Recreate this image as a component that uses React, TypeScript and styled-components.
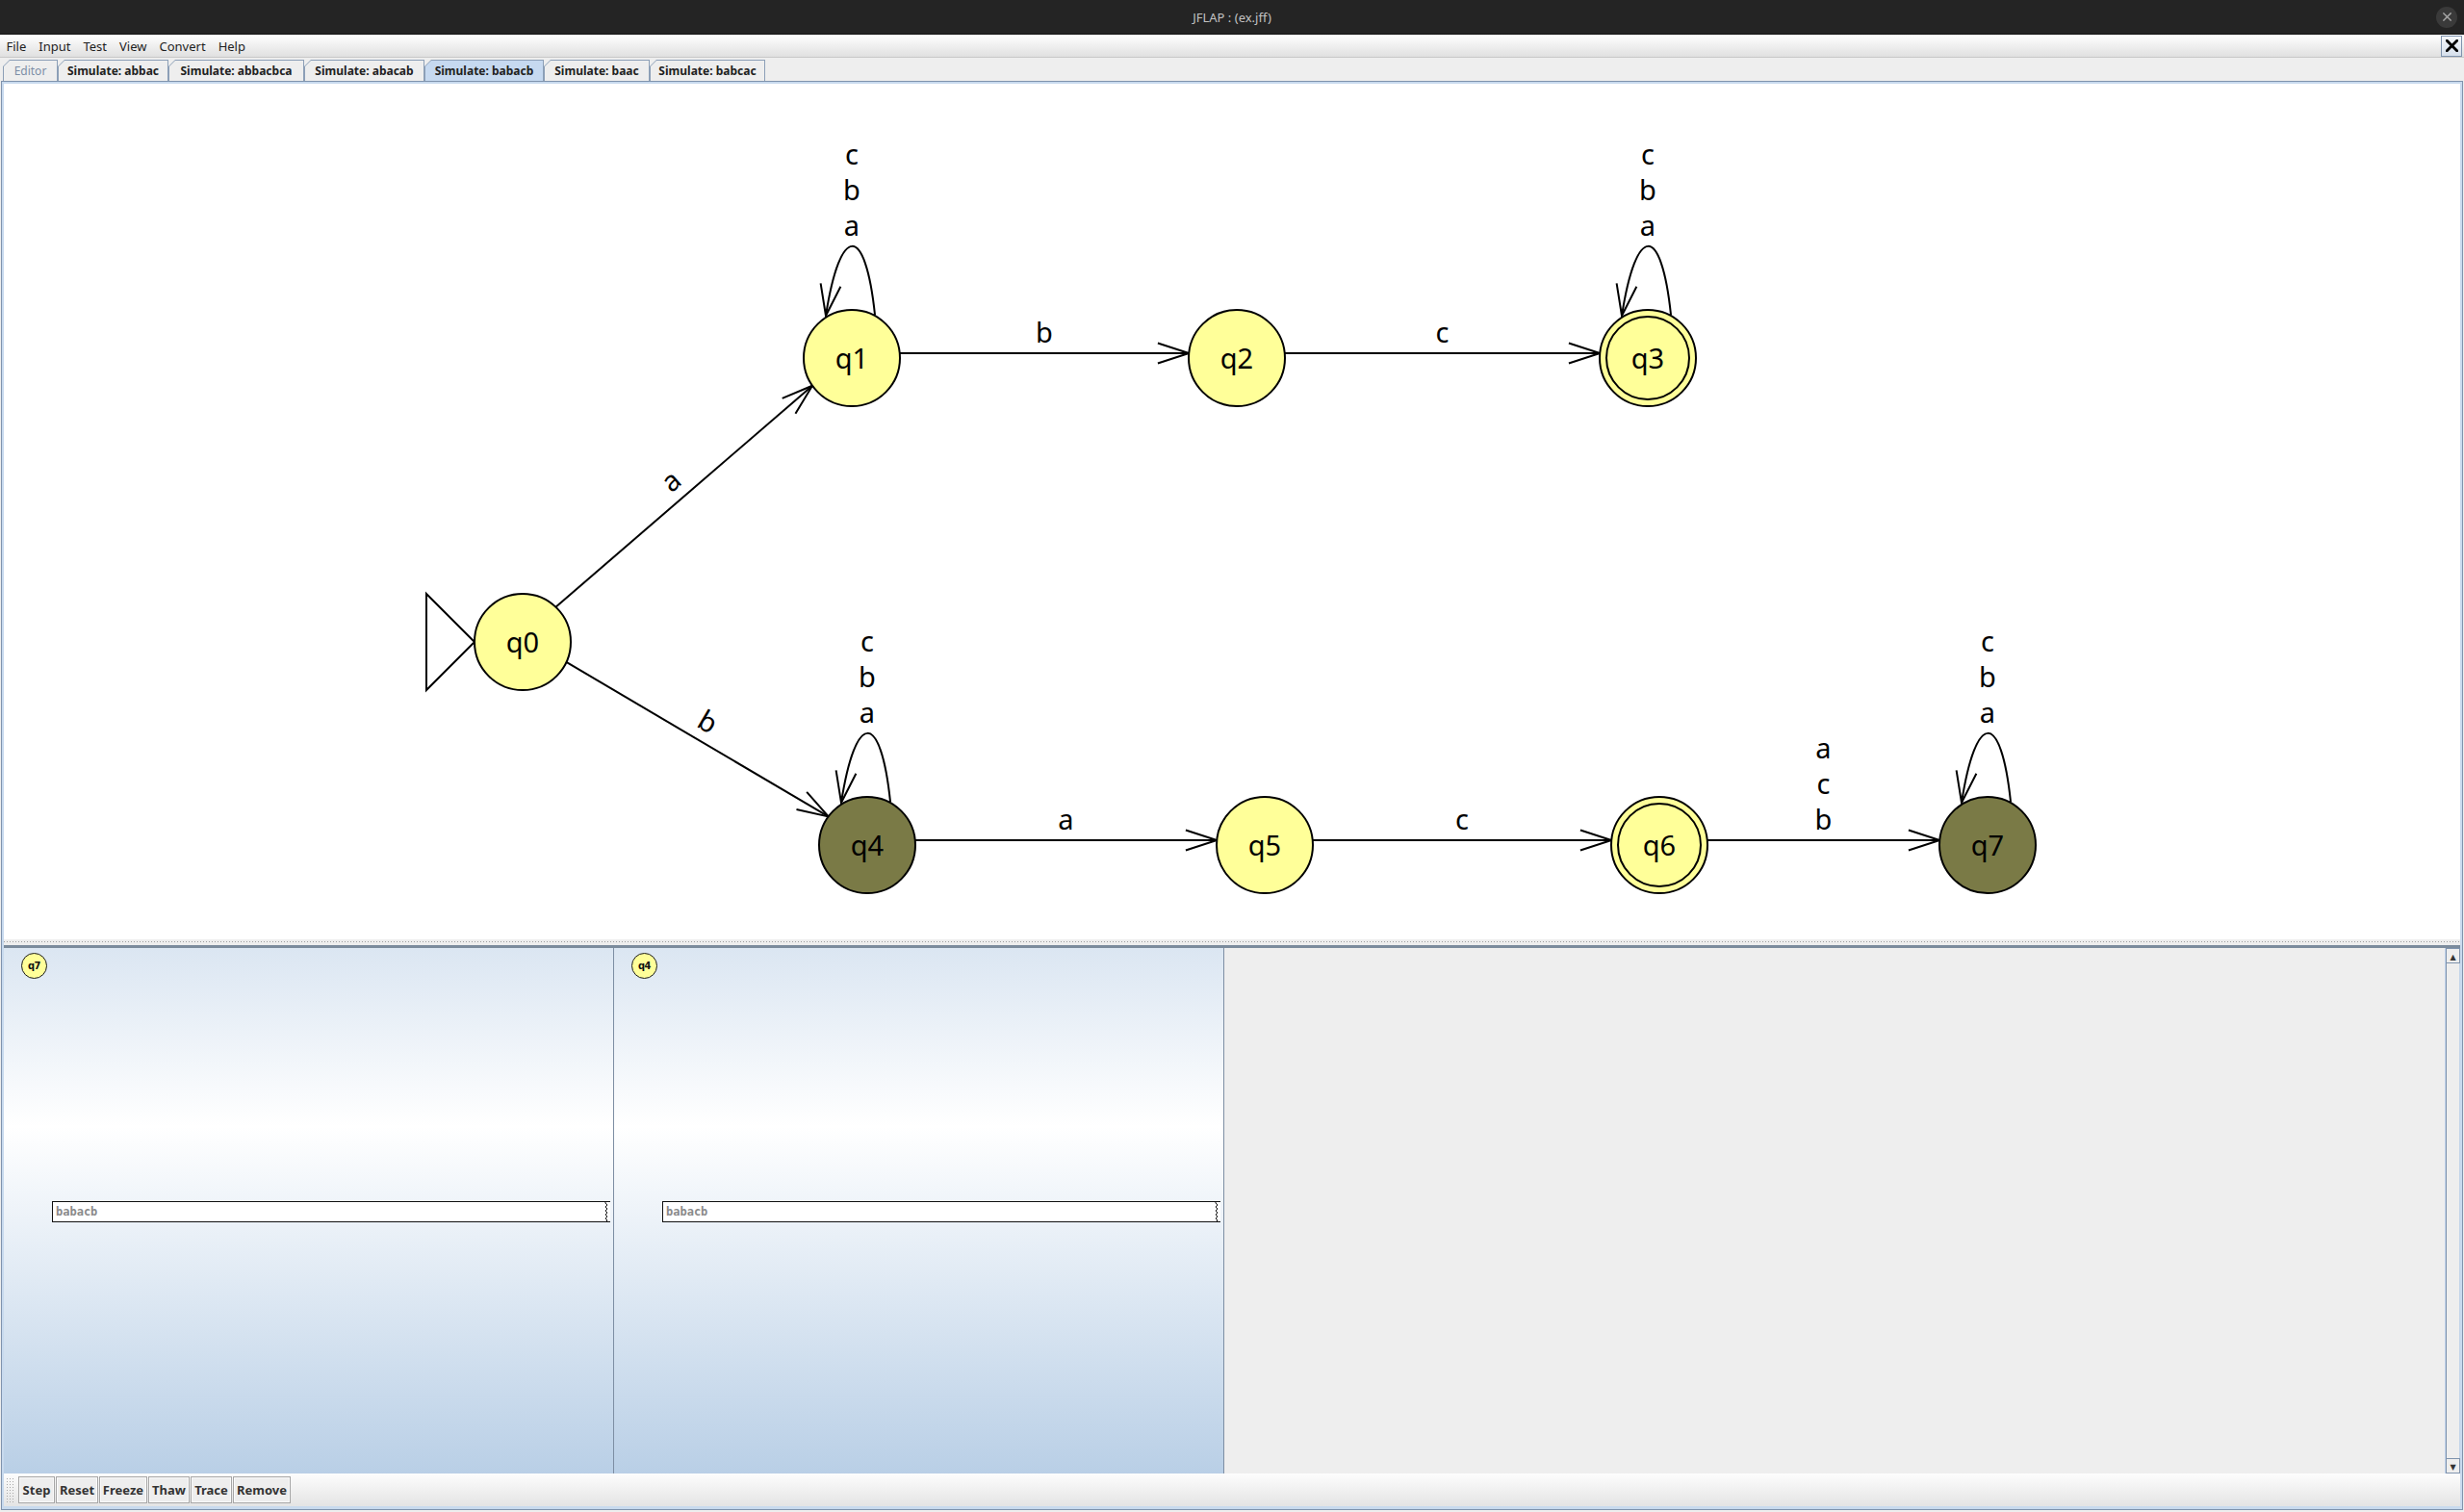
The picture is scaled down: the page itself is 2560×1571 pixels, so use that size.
import React from 'react';
import styled, { createGlobalStyle } from 'styled-components';

const GlobalStyle = createGlobalStyle`
  html, body { margin: 0; padding: 0; width: 2560px; height: 1571px; overflow: hidden; background: #eeeeee; }
  #root { width: 2560px; height: 1571px; }
  * { box-sizing: border-box; }
`;

const Window = styled.div`
  width: 2560px;
  height: 1571px;
  display: flex;
  flex-direction: column;
  background: #eeeeee;
  font-family: "Noto Sans", "DejaVu Sans", sans-serif;
`;

const TitleBar = styled.div`
  height: 36px;
  flex: none;
  background: #242424;
  border-bottom: 1px solid #151515;
  display: grid;
  grid-template-columns: 1fr auto 1fr;
  align-items: center;
`;

const TitleText = styled.div`
  grid-column: 2;
  color: #c2c2c2;
  font-size: 13px;
`;

const TitleClose = styled.div`
  grid-column: 3;
  justify-self: end;
  margin-right: 7px;
  width: 22px;
  height: 22px;
  border-radius: 50%;
  background: #3a3a3a;
  display: flex;
  align-items: center;
  justify-content: center;
`;

const MenuBar = styled.div`
  height: 24px;
  flex: none;
  display: flex;
  align-items: center;
  background: linear-gradient(#ffffff, #e0e0e0);
  border-bottom: 1px solid #c8c8c8;
`;

const MenuItem = styled.div`
  font-size: 13px;
  color: #1e1e1e;
  padding: 0 6.5px;
`;

const MenuClose = styled.div`
  margin-left: auto;
  margin-right: 2px;
  width: 22px;
  height: 22px;
  border: 1px solid #7f93ad;
  background: linear-gradient(#f4f7fb, #d6e0ec);
  display: flex;
  align-items: center;
  justify-content: center;
`;

const TabStrip = styled.div`
  height: 24px;
  flex: none;
  display: flex;
  align-items: flex-end;
  padding-left: 3px;
`;

const Tab = styled.div<{ $w: number }>`
  width: ${(p) => p.$w}px;
  height: 22px;
  background: #8c9fb7;
  padding: 1px 1px 0 1px;
  clip-path: polygon(7px 0, 100% 0, 100% 100%, 0 100%, 0 7px);
`;

const TabFace = styled.div<{ $active?: boolean; $disabled?: boolean }>`
  height: 100%;
  background: ${(p) => (p.$active ? '#c6d9f0' : '#eeeeee')};
  clip-path: polygon(6px 0, 100% 0, 100% 100%, 0 100%, 0 6px);
  display: flex;
  align-items: center;
  justify-content: center;
  font-size: 12px;
  font-weight: ${(p) => (p.$disabled ? 400 : 700)};
  color: ${(p) => (p.$disabled ? '#7d8ea6' : '#222222')};
  white-space: nowrap;
`;

const TabBody = styled.div`
  flex: 1;
  margin: 0 1px 2px 1px;
  border: 1px solid #7f93ad;
  background: #c8daee;
  padding: 2px;
  display: flex;
  flex-direction: column;
`;

const Canvas = styled.div`
  height: 889px;
  flex: none;
  background: #ffffff;
`;

const Divider = styled.div`
  height: 6px;
  flex: none;
  background: #eeeeee;
  padding-top: 2px;
  &::before {
    content: '';
    display: block;
    height: 1px;
    background: repeating-linear-gradient(90deg, #9c9c9c 0 1px, transparent 1px 3px);
  }
`;

const ConfigArea = styled.div`
  height: 549px;
  flex: none;
  border-top: 3px solid #7b8b9c;
  display: flex;
  background: #eeeeee;
`;

const ConfigPane = styled.div`
  width: 634px;
  flex: none;
  border-right: 1px solid #7d8ea3;
  background: linear-gradient(#dbe6f2 0%, #ffffff 34%, #b9cfe6 100%);
  padding: 5px 0 0 18px;
  display: flex;
  flex-direction: column;
  align-items: flex-start;
`;

const Badge = styled.div`
  width: 27px;
  height: 27px;
  border-radius: 50%;
  background: #ffff99;
  border: 1px solid #1a1a1a;
  display: flex;
  align-items: center;
  justify-content: center;
  font-family: "DejaVu Sans Condensed", "DejaVu Sans", sans-serif;
  font-weight: 700;
  font-size: 11px;
  letter-spacing: -0.6px;
  color: #111;
`;

const Tape = styled.div`
  margin-top: 231px;
  margin-left: 32px;
  width: 580px;
  height: 22px;
  background: #ffffff;
  border: 1px solid #111111;
  border-right: none;
  display: flex;
  align-items: center;
`;

const TapeText = styled.span`
  flex: 1;
  padding-left: 3px;
  font-family: "DejaVu Sans Mono", monospace;
  font-weight: 700;
  font-size: 12px;
  color: #8a8a8a;
`;

const Filler = styled.div`
  flex: 1;
`;

const ScrollBar = styled.div`
  width: 16px;
  flex: none;
  display: flex;
  flex-direction: column;
  border-left: 1px solid #c2d4ea;
  background: #eeeeee;
`;

const ScrollBtn = styled.div`
  height: 16px;
  flex: none;
  border: 1px solid #7f93ad;
  background: #eeeeee;
  display: flex;
  align-items: center;
  justify-content: center;
  font-size: 8px;
  color: #333;
`;

const ScrollTrack = styled.div`
  flex: 1;
  border-left: 1px solid #7f93ad;
  border-right: 1px solid #c2d4ea;
`;

const ButtonBar = styled.div`
  height: 34px;
  flex: none;
  display: flex;
  align-items: center;
  padding-left: 2px;
  background: linear-gradient(#fdfdfd, #e4e4e4);
`;

const Grip = styled.div`
  width: 9px;
  height: 26px;
  margin-right: 4px;
  background-image: radial-gradient(circle, #a8a8a8 0.7px, transparent 0.9px);
  background-size: 3px 3px;
`;

const ToolButton = styled.div<{ $w: number }>`
  width: ${(p) => p.$w}px;
  height: 28px;
  margin-right: 1px;
  border: 1px solid #a6a6a6;
  box-shadow: inset 0 0 0 1px #fafafa;
  background: #eeeeee;
  display: flex;
  align-items: center;
  justify-content: center;
  font-size: 13px;
  font-weight: 700;
  color: #333333;
`;

/* ---------------- automaton drawing ---------------- */

type St = { id: string; x: number; y: number; initial?: boolean; final?: boolean; active?: boolean };

const R = 50;
const states: St[] = [
  { id: 'q0', x: 543, y: 667, initial: true },
  { id: 'q1', x: 885, y: 372 },
  { id: 'q2', x: 1285, y: 372 },
  { id: 'q3', x: 1712, y: 372, final: true },
  { id: 'q4', x: 901, y: 878, active: true },
  { id: 'q5', x: 1314, y: 878 },
  { id: 'q6', x: 1724, y: 878, final: true },
  { id: 'q7', x: 2065, y: 878, active: true },
];
const S: Record<string, St> = Object.fromEntries(states.map((s) => [s.id, s]));

const edges: { from: string; to: string; labels: string[] }[] = [
  { from: 'q0', to: 'q1', labels: ['a'] },
  { from: 'q0', to: 'q4', labels: ['b'] },
  { from: 'q1', to: 'q2', labels: ['b'] },
  { from: 'q2', to: 'q3', labels: ['c'] },
  { from: 'q4', to: 'q5', labels: ['a'] },
  { from: 'q5', to: 'q6', labels: ['c'] },
  { from: 'q6', to: 'q7', labels: ['b', 'c', 'a'] },
];
const loops = ['q1', 'q3', 'q4', 'q7'];
const LOOP_LABELS = ['a', 'b', 'c'];
const FONT = '"Noto Sans", "DejaVu Sans", sans-serif';
const FS = 29;
const LINE = 37;

const rot = (x: number, y: number, deg: number) => {
  const r = (deg * Math.PI) / 180;
  return [x * Math.cos(r) - y * Math.sin(r), x * Math.sin(r) + y * Math.cos(r)];
};

const arrowHead = (tx: number, ty: number, bx: number, by: number) => {
  const [ax, ay] = rot(bx, by, 18);
  const [cx, cy] = rot(bx, by, -18);
  const L = 34;
  return `M${tx + ax * L},${ty + ay * L} L${tx},${ty} L${tx + cx * L},${ty + cy * L}`;
};

const Edge: React.FC<{ from: St; to: St; labels: string[] }> = ({ from, to, labels }) => {
  const dx = to.x - from.x;
  const dy = to.y - from.y;
  const len = Math.hypot(dx, dy);
  const ux = dx / len;
  const uy = dy / len;
  const px = uy;
  const py = -ux;
  const o = 5;
  const k = Math.sqrt(R * R - o * o);
  const sx = from.x + px * o + ux * k;
  const sy = from.y + py * o + uy * k;
  const ex = to.x + px * o - ux * k;
  const ey = to.y + py * o - uy * k;
  const mx = (from.x + to.x) / 2;
  const my = (from.y + to.y) / 2;
  const ang = (Math.atan2(dy, dx) * 180) / Math.PI;
  return (
    <g>
      <line x1={sx} y1={sy} x2={ex} y2={ey} stroke="#000" strokeWidth={2} />
      <path d={arrowHead(ex, ey, -ux, -uy)} fill="none" stroke="#000" strokeWidth={2} />
      <g transform={`translate(${mx},${my}) rotate(${ang})`}>
        {labels.map((l, i) => (
          <text key={i} x={0} y={-16 - LINE * i} textAnchor="middle" fontFamily={FONT} fontSize={FS} fill="#000">
            {l}
          </text>
        ))}
      </g>
    </g>
  );
};

const Loop: React.FC<{ s: St }> = ({ s }) => {
  const { x, y } = s;
  const p0 = [x + 24, y - 45];
  const c1 = [x + 14, y - 140];
  const c2 = [x - 12, y - 140];
  const p3 = [x - 27, y - 44];
  const bx = c2[0] - p3[0];
  const by = c2[1] - p3[1];
  const bl = Math.hypot(bx, by);
  return (
    <g>
      <path
        d={`M${p0[0]},${p0[1]} C${c1[0]},${c1[1]} ${c2[0]},${c2[1]} ${p3[0]},${p3[1]}`}
        fill="none"
        stroke="#000"
        strokeWidth={2}
      />
      <path d={arrowHead(p3[0], p3[1], bx / bl, by / bl)} fill="none" stroke="#000" strokeWidth={2} />
      {LOOP_LABELS.map((l, i) => (
        <text key={l} x={x} y={y - 127 - LINE * i} textAnchor="middle" fontFamily={FONT} fontSize={FS} fill="#000">
          {l}
        </text>
      ))}
    </g>
  );
};

const StateNode: React.FC<{ s: St }> = ({ s }) => (
  <g>
    {s.initial && (
      <polygon
        points={`${s.x - 100},${s.y - 50} ${s.x - R},${s.y} ${s.x - 100},${s.y + 50}`}
        fill="#ffffff"
        stroke="#000"
        strokeWidth={2}
      />
    )}
    <circle cx={s.x} cy={s.y} r={R} fill={s.active ? '#7a7a46' : '#ffff99'} stroke="#000" strokeWidth={2} />
    {s.final && <circle cx={s.x} cy={s.y} r={43} fill="none" stroke="#000" strokeWidth={2} />}
    <text x={s.x} y={s.y + 11} textAnchor="middle" fontFamily={FONT} fontSize={FS} fill="#000">
      {s.id}
    </text>
  </g>
);

const Automaton: React.FC = () => (
  <svg width="2552" height="889" viewBox="4 87 2552 889" style={{ display: 'block' }}>
    {edges.map((e, i) => (
      <Edge key={i} from={S[e.from]} to={S[e.to]} labels={e.labels} />
    ))}
    {loops.map((id) => (
      <Loop key={id} s={S[id]} />
    ))}
    {states.map((s) => (
      <StateNode key={s.id} s={s} />
    ))}
  </svg>
);

const Zigzag: React.FC = () => (
  <svg width="6" height="22" viewBox="0 0 6 22" style={{ display: 'block', flex: 'none' }}>
    <path d="M1,0 L1,2 L3,4 L1,6 L3,8 L1,10 L3,12 L1,14 L3,16 L1,18 L3,20 L1,22" fill="none" stroke="#111" strokeWidth={1} />
  </svg>
);

const Cross: React.FC<{ size: number; color: string; w: number }> = ({ size, color, w }) => (
  <svg width={size} height={size} viewBox="0 0 10 10">
    <path d="M1,1 L9,9 M9,1 L1,9" stroke={color} strokeWidth={w} strokeLinecap="square" />
  </svg>
);

const tabs = [
  { label: 'Editor', w: 57, disabled: true },
  { label: 'Simulate: abbac', w: 115 },
  { label: 'Simulate: abbacbca', w: 141 },
  { label: 'Simulate: abacab', w: 125 },
  { label: 'Simulate: babacb', w: 124, active: true },
  { label: 'Simulate: baac', w: 110 },
  { label: 'Simulate: babcac', w: 120 },
];

const buttons = [
  { label: 'Step', w: 38 },
  { label: 'Reset', w: 44 },
  { label: 'Freeze', w: 50 },
  { label: 'Thaw', w: 43 },
  { label: 'Trace', w: 43 },
  { label: 'Remove', w: 60 },
];

const configs = ['q7', 'q4'];

export default function App() {
  return (
    <>
      <GlobalStyle />
      <Window>
        <TitleBar>
          <TitleText>JFLAP : (ex.jff)</TitleText>
          <TitleClose>
            <Cross size={9} color="#a8a8a8" w={1.6} />
          </TitleClose>
        </TitleBar>
        <MenuBar>
          {['File', 'Input', 'Test', 'View', 'Convert', 'Help'].map((m) => (
            <MenuItem key={m}>{m}</MenuItem>
          ))}
          <MenuClose>
            <Cross size={13} color="#000" w={2.2} />
          </MenuClose>
        </MenuBar>
        <TabStrip>
          {tabs.map((t) => (
            <Tab key={t.label} $w={t.w}>
              <TabFace $active={t.active} $disabled={t.disabled}>
                {t.label}
              </TabFace>
            </Tab>
          ))}
        </TabStrip>
        <TabBody>
          <Canvas>
            <Automaton />
          </Canvas>
          <Divider />
          <ConfigArea>
            {configs.map((c) => (
              <ConfigPane key={c}>
                <Badge>{c}</Badge>
                <Tape>
                  <TapeText>babacb</TapeText>
                  <Zigzag />
                </Tape>
              </ConfigPane>
            ))}
            <Filler />
            <ScrollBar>
              <ScrollBtn>▲</ScrollBtn>
              <ScrollTrack />
              <ScrollBtn>▼</ScrollBtn>
            </ScrollBar>
          </ConfigArea>
          <ButtonBar>
            <Grip />
            {buttons.map((b) => (
              <ToolButton key={b.label} $w={b.w}>
                {b.label}
              </ToolButton>
            ))}
          </ButtonBar>
        </TabBody>
      </Window>
    </>
  );
}
